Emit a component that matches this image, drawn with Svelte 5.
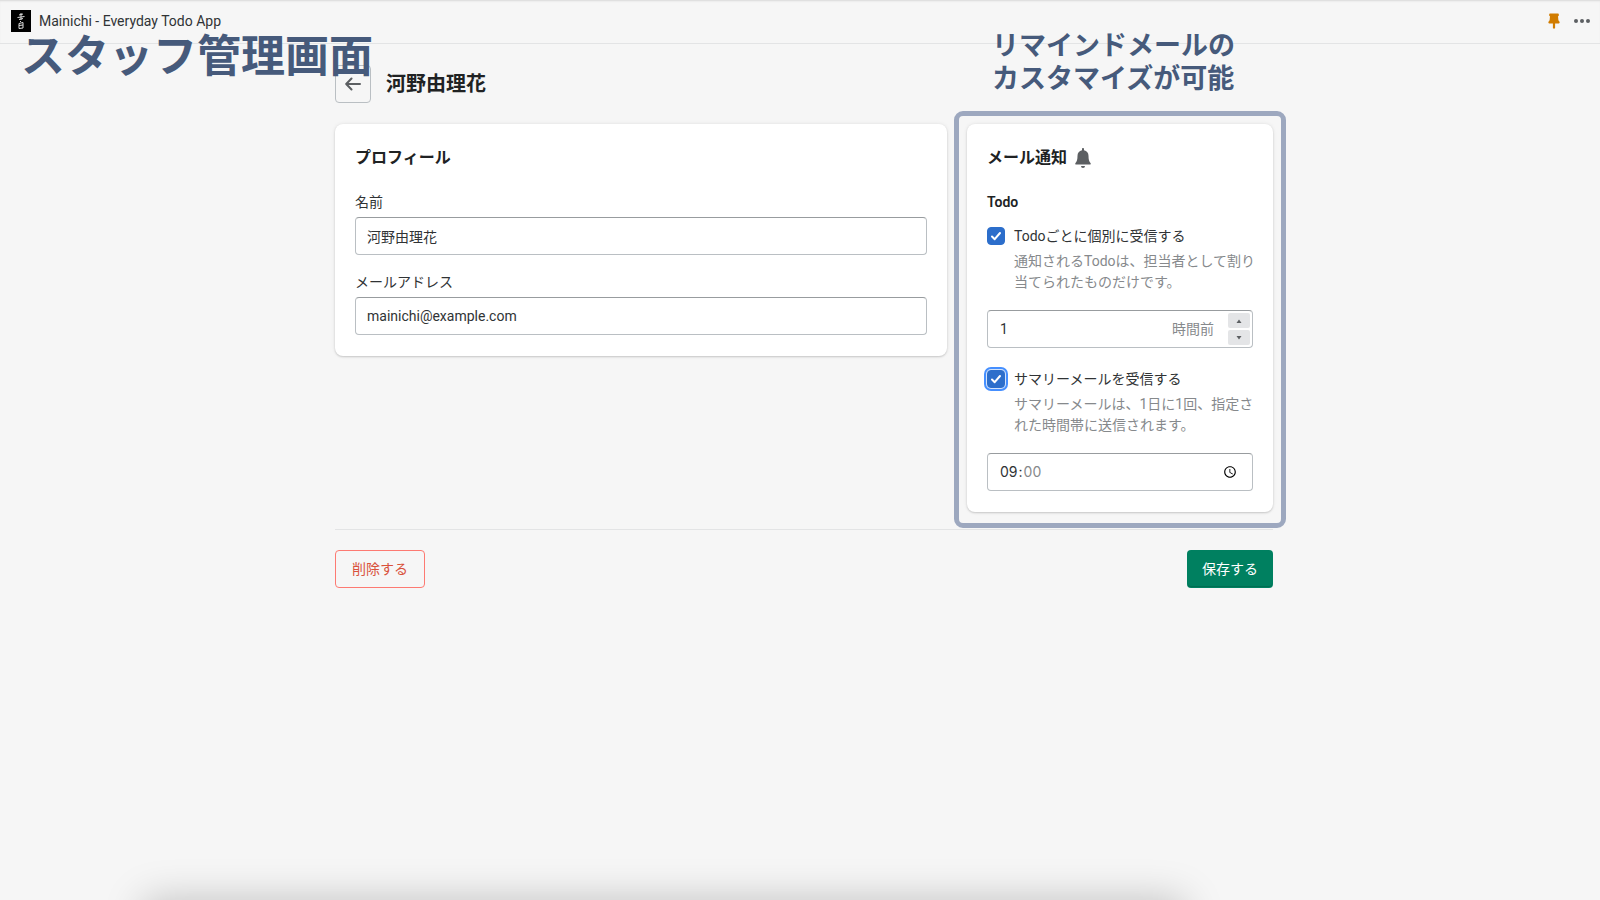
<script>
  let name = '河野由理花';
  let email = 'mainichi@example.com';
  let hours = 1;
  let time = '09:00';
  let notifyEach = true;
  let notifySummary = true;

  function step(n) {
    hours = Math.max(0, Number(hours) + n);
  }
</script>

<svelte:head>
  <title>Mainichi - Everyday Todo App</title>
</svelte:head>

<div class="page">
  <header class="topbar">
    <svg class="logo" viewBox="0 0 20 22" aria-hidden="true">
      <rect width="20" height="22" fill="#000" />
      <g fill="none" stroke="#ddd" stroke-width="1">
        <path d="M10 3v7M8 5l4-1M6.500 7.500l7-1M8 9.500l4-1" />
        <path d="M8 13.500l4-1v5.500l-4 .5zM8 15.500l4-.5M9 12l1-1" />
      </g>
    </svg>
    <span class="app-name">Mainichi - Everyday Todo App</span>
    <button class="icon-button" aria-label="ピン留め">
      <svg width="12" height="16" viewBox="0 0 12 16">
        <path fill="#d17c00" d="M2 .5h8a.8.8 0 0 1 .8.8v1.200a.8.8 0 0 1-.8.8l.4 3.900 1.100 1.600c.4.700.1 1.700-.8 1.700H7.100V15a.6.6 0 0 1-.6.6h-1a.6.6 0 0 1-.6-.6v-4.500H1.300c-.9 0-1.200-1-.8-1.700l1.100-1.600L2 3.300a.8.8 0 0 1-.8-.8V1.300A.8.8 0 0 1 2 .5z" />
      </svg>
    </button>
    <button class="icon-button" aria-label="メニュー">
      <svg width="16" height="16" viewBox="0 0 16 16" fill="#5c5f62">
        <circle cx="2" cy="8" r="2" />
        <circle cx="8" cy="8" r="2" />
        <circle cx="14" cy="8" r="2" />
      </svg>
    </button>
  </header>

  <p class="caption">スタッフ管理画面</p>

  <main>
    <div class="heading">
      <button class="back" aria-label="戻る">
        <svg width="16" height="14" viewBox="0 0 16 14" fill="none" stroke="#5c5f62" stroke-width="2" stroke-linecap="round" stroke-linejoin="round">
          <path d="M15 7H1.500M6.500 1.500L1.200 7l5.300 5.500" />
        </svg>
      </button>
      <h1>河野由理花</h1>
    </div>

    <div class="columns">
      <section class="card">
        <h2>プロフィール</h2>
        <div class="field">
          <label for="name">名前</label>
          <input id="name" class="control" type="text" bind:value={name} />
        </div>
        <div class="field">
          <label for="email">メールアドレス</label>
          <input id="email" class="control" type="email" bind:value={email} />
        </div>
      </section>

      <section class="card highlighted">
        <p class="note">リマインドメールの<br />カスタマイズが可能</p>
        <h2>
          メール通知
          <svg width="16" height="20" viewBox="0 0 16 20" fill="#5c5f62" aria-hidden="true">
            <path d="M8 0c.7 0 1 .5 1 1v1.200c2.900.5 4.500 2.700 4.500 5.500 0 4 .6 5.500 2 7.200.5.700.3 1.600-.6 1.600H1.100c-.9 0-1.100-.9-.6-1.600 1.400-1.700 2-3.200 2-7.200C2.500 4.900 4.100 2.700 7 2.200V1c0-.5.3-1 1-1z" />
            <path d="M6 18h4a2 2 0 0 1-4 0z" />
          </svg>
        </h2>
        <h3>Todo</h3>

        <div class="choice">
          <span class="tick">
            <input id="each" type="checkbox" bind:checked={notifyEach} aria-describedby="each-help" />
            <svg viewBox="0 0 18 18" aria-hidden="true"><path d="M5 9.500l2.700 2.700L13 6" /></svg>
          </span>
          <label for="each">Todoごとに個別に受信する</label>
          <p id="each-help">通知されるTodoは、担当者として割り当てられたものだけです。</p>
        </div>

        <div class="number control">
          <input type="number" aria-label="時間前" bind:value={hours} />
          <span class="suffix">時間前</span>
          <div class="spinner">
            <button tabindex="-1" aria-label="増やす" on:click={() => step(1)}>
              <svg width="6" height="4" viewBox="0 0 6 4"><path d="M.5 4L3 .5 5.500 4z" /></svg>
            </button>
            <button tabindex="-1" aria-label="減らす" on:click={() => step(-1)}>
              <svg width="6" height="4" viewBox="0 0 6 4"><path d="M.5 0L3 3.500 5.500 0z" /></svg>
            </button>
          </div>
        </div>

        <div class="choice">
          <span class="tick focused">
            <input id="summary" type="checkbox" bind:checked={notifySummary} aria-describedby="summary-help" />
            <svg viewBox="0 0 18 18" aria-hidden="true"><path d="M5 9.500l2.700 2.700L13 6" /></svg>
          </span>
          <label for="summary">サマリーメールを受信する</label>
          <p id="summary-help">サマリーメールは、1日に1回、指定された時間帯に送信されます。</p>
        </div>

        <input class="control time" type="time" aria-label="送信時間" bind:value={time} />
      </section>
    </div>

    <footer class="actions">
      <button class="button danger">削除する</button>
      <button class="button primary">保存する</button>
    </footer>
  </main>

  <div class="sheet-shadow"></div>
</div>

<style>
  :global(body) { background: #f6f6f6; }

  .page {
    position: relative;
    min-height: 100vh;
    overflow: hidden;
    box-sizing: border-box;
    font-family: Roboto, "Noto Sans CJK JP", sans-serif;
    font-size: 14px;
    line-height: 20px;
    color: #303335;
  }
  .page *, .page *::before, .page *::after { box-sizing: border-box; }

  h1, h2, h3, p { margin: 0; }
  button, input { font: inherit; color: inherit; }
  button { cursor: pointer; }

  .topbar {
    display: flex;
    align-items: center;
    height: 44px;
    padding: 0 10px 1px 11px;
    border-bottom: 1px solid #e3e4e5;
    box-shadow: inset 0 2px 2px -1px #d8d8d8;
  }
  .logo { width: 20px; height: 22px; margin-right: 8px; }
  .app-name { flex: 1; }
  .icon-button {
    display: flex;
    padding: 0;
    margin-left: 14px;
    border: 0;
    background: none;
  }

  .caption {
    position: absolute;
    top: 27px;
    left: 21px;
    font-size: 44px;
    line-height: 60px;
    font-weight: 700;
    color: #465a7b;
    pointer-events: none;
  }

  main {
    max-width: 978px;
    margin: 0 auto;
    padding: 21px 16px 20px 24px;
  }

  .heading { display: flex; align-items: center; gap: 15px; margin-bottom: 21px; }
  .back {
    display: flex;
    align-items: center;
    justify-content: center;
    width: 36px;
    height: 38px;
    padding: 0;
    border: 1px solid #babfc3;
    border-radius: 4px;
    background: none;
  }
  h1 { font-size: 20px; line-height: 28px; font-weight: 700; color: #202223; }

  .columns {
    display: grid;
    grid-template-columns: minmax(0, 2fr) minmax(0, 1fr);
    align-items: start;
    gap: 20px;
    padding-bottom: 17px;
    border-bottom: 1px solid #e3e4e5;
  }

  .card {
    padding: 20px 20px 21px;
    border-radius: 8px;
    background: #fff;
    box-shadow: 0 0 4px rgba(23, 24, 24, .08), 0 1px 2px rgba(0, 0, 0, .16);
  }
  h2 {
    display: flex;
    align-items: center;
    gap: 8px;
    margin-bottom: 20px;
    font-size: 16px;
    line-height: 28px;
    font-weight: 700;
    color: #202223;
  }
  h3 { margin-bottom: 14px; font-size: 14px; line-height: 20px; font-weight: 600; color: #202223; }

  .field + .field { margin-top: 17px; }
  .field label { display: block; margin-bottom: 5px; }

  .control {
    display: block;
    width: 100%;
    height: 38px;
    padding: 0 11px 1px;
    border: 1px solid #babfc3;
    border-top-color: #989c9f;
    border-radius: 4px;
    background: #fff;
  }

  .highlighted { position: relative; }
  .highlighted::after {
    content: "";
    position: absolute;
    inset: -13px -13px -16px;
    border: 5px solid #9da8bf;
    border-radius: 9px;
    pointer-events: none;
  }
  .note {
    position: absolute;
    bottom: calc(100% + 28px);
    left: 25px;
    font-size: 27px;
    line-height: 33px;
    font-weight: 700;
    color: #465a7b;
    white-space: nowrap;
  }

  .choice {
    display: grid;
    grid-template-columns: 18px 1fr;
    column-gap: 9px;
    row-gap: 5px;
    align-items: center;
    margin-bottom: 17px;
  }
  .choice p { grid-column: 2; margin-right: -4px; line-height: 21px; color: #86898c; }
  .tick { display: grid; width: 18px; height: 18px; border-radius: 4px; }
  .tick input, .tick svg { grid-area: 1 / 1; width: 18px; height: 18px; margin: 0; }
  .tick input {
    appearance: none;
    border: 1px solid #8c9196;
    border-radius: 4px;
    background: #fff;
  }
  .tick input:checked { border-color: #2c6ecb; background: #2c6ecb; }
  .tick svg {
    fill: none;
    stroke: #fff;
    stroke-width: 2;
    stroke-linecap: round;
    stroke-linejoin: round;
    pointer-events: none;
  }
  .focused { box-shadow: 0 0 0 1px #d3e3fb, 0 0 0 3px #458fff; }

  .number { display: flex; align-items: center; margin-bottom: 21px; padding: 0 2px 0 12px; }
  .number input {
    flex: 1;
    min-width: 0;
    padding: 0;
    border: 0;
    outline: none;
    background: none;
    appearance: textfield;
  }
  .number input::-webkit-inner-spin-button { appearance: none; margin: 0; }
  .suffix { margin-right: 14px; color: #86898c; }
  .spinner { display: grid; gap: 2px; width: 22px; }
  .spinner button {
    display: flex;
    align-items: center;
    justify-content: center;
    height: 15px;
    padding: 0;
    border: 0;
    border-radius: 2px;
    background: #e4e5e7;
  }
  .spinner path { fill: #5c5f62; }

  .time { padding: 0 11px; font-family: Inter, sans-serif; }
  .time::-webkit-datetime-edit-ampm-field { display: none; }
  .time::-webkit-datetime-edit-minute-field { color: #86898c; }

  .actions { display: flex; justify-content: space-between; padding-top: 20px; }
  .button {
    height: 38px;
    padding: 0 14px;
    border: 1px solid transparent;
    border-radius: 4px;
    line-height: 20px;
  }
  .danger { padding: 0 16px; border-color: #fd7a72; background: none; color: #d9523c; }
  .primary { background: #008060; color: #fff; box-shadow: inset 0 -1px 0 #006e52; }

  /* top of a sheet that sits just below the window */
  .sheet-shadow {
    position: absolute;
    top: 100%;
    left: 9%;
    right: 26%;
    height: 80px;
    box-shadow: 0 0 40px rgba(0, 0, 0, .22);
    pointer-events: none;
  }
</style>
